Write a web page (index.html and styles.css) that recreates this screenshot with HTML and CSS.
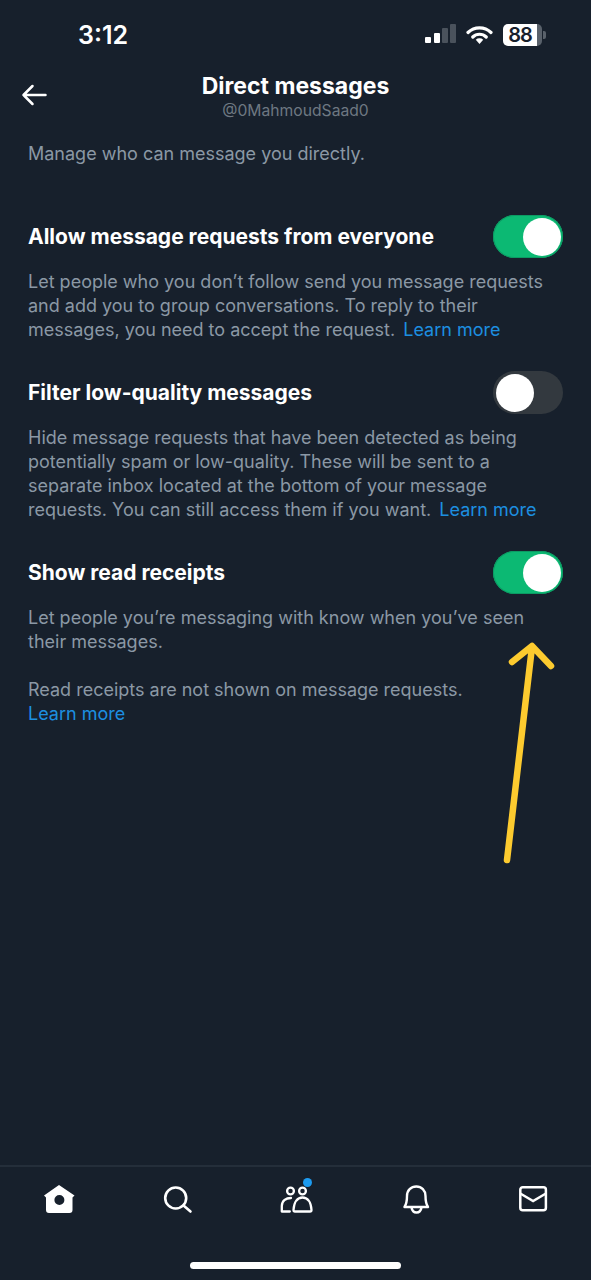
FILE: index.html
```html
<!DOCTYPE html>
<html lang="en">

<head>
  <meta charset="UTF-8">
  <meta name="viewport" content="width=device-width, initial-scale=1.0">
  <title>Direct messages</title>

  <link rel="stylesheet" href="styles.css">
</head>

<body>
  <div id="screen">
    <div id="statusBar">
      <span id="clock">3:12</span>
      <div id="statusIcons">
        <svg width="31" height="22" viewBox="0 0 31 22">
          <rect x="0" y="13" width="6" height="6" rx="1" fill="#fff" />
          <rect x="9" y="9" width="6" height="10" rx="1" fill="#fff" />
          <rect x="17" y="4" width="6" height="15" rx="1" fill="#4a525c" />
          <rect x="25" y="0" width="6" height="19" rx="1" fill="#4a525c" />
        </svg>
        <svg width="27" height="22" viewBox="0 0 27 22">
          <path d="M2 8.500a16.500 16.500 0 0 1 23 0M6.800 13a9.500 9.500 0 0 1 13.400 0" fill="none" stroke="#fff" stroke-width="3.200" stroke-linecap="round" />
          <path d="M9.800 15.800a5.500 5.500 0 0 1 7.400 0L13.500 20z" fill="#fff" />
        </svg>
        <div id="battery">
          <span id="batteryLevel">88</span>
          <span id="batteryRest"></span>
          <span id="batteryCap"></span>
        </div>
      </div>
    </div>

    <div id="header">
      <button id="backBtn" aria-label="Back">
        <svg width="26" height="24" viewBox="0 0 26 24">
          <path d="M24.500 12H2.500M11.500 3l-9 9 9 9" fill="none" stroke="#fff" stroke-width="2.500" stroke-linecap="round" stroke-linejoin="round" />
        </svg>
      </button>
      <h1>Direct messages</h1>
      <div id="handle">@0MahmoudSaad0</div>
    </div>

    <div id="content">
      <p class="muted" id="intro">Manage who can message you directly.</p>

      <div class="setting">
        <div class="settingRow">
          <h2>Allow message requests from everyone</h2>
          <div class="toggle on"><span class="knob"></span></div>
        </div>
        <p class="muted">Let people who you don’t follow send you message requests<br>and add you to group conversations. To reply to their<br>messages, you need to accept the request. <a class="inlineLink" href="#">Learn more</a></p>
      </div>

      <div class="setting">
        <div class="settingRow">
          <h2>Filter low-quality messages</h2>
          <div class="toggle"><span class="knob"></span></div>
        </div>
        <p class="muted">Hide message requests that have been detected as being<br>potentially spam or low-quality. These will be sent to a<br>separate inbox located at the bottom of your message<br>requests. You can still access them if you want. <a class="inlineLink" href="#">Learn more</a></p>
      </div>

      <div class="setting">
        <div class="settingRow">
          <h2>Show read receipts</h2>
          <div class="toggle on"><span class="knob"></span></div>
        </div>
        <p class="muted">Let people you’re messaging with know when you’ve seen<br>their messages.</p>
        <p class="muted" id="receiptNote">Read receipts are not shown on message requests.<br><a href="#">Learn more</a></p>
      </div>
    </div>

    <svg id="arrow" width="80" height="240" viewBox="0 0 80 240">
      <path d="M25 224L50 11M30 26L50 10L69 30" fill="none" stroke="#fdcb2f" stroke-width="6.500" stroke-linecap="round" stroke-linejoin="round" />
    </svg>

    <div id="tabBar">
      <div id="tabs">
        <svg width="36" height="36" viewBox="0 0 36 36">
          <path fill-rule="evenodd" d="M18 3L33.500 13.500L31.500 15.500V28a3 3 0 0 1-3 3H8a3 3 0 0 1-3-3V15.500L3 13.500zM18.400 13a5 5 0 1 0 0 10a5 5 0 0 0 0-10z" fill="#fff" />
        </svg>
        <svg width="36" height="36" viewBox="0 0 36 36">
          <circle cx="16.700" cy="16" r="10.500" fill="none" stroke="#fff" stroke-width="2.600" />
          <path d="M24.500 23.500L31.500 29.500" fill="none" stroke="#fff" stroke-width="2.600" stroke-linecap="round" />
        </svg>
        <div id="peopleTab">
          <svg width="36" height="36" viewBox="0 0 36 36">
            <circle cx="13.500" cy="9" r="3.400" fill="none" stroke="#fff" stroke-width="2.300" />
            <circle cx="25.500" cy="9" r="3.400" fill="none" stroke="#fff" stroke-width="2.300" />
            <path d="M14 16c-5 0-9 2.500-9.200 8v5.500h8" fill="none" stroke="#fff" stroke-width="2.300" stroke-linejoin="round" stroke-linecap="round" />
            <path d="M25.500 15.500c-5 0-8.500 4.500-9 12.500c0 1 0.500 1.500 1.500 1.500h15c1 0 1.500-0.500 1.500-1.500c-0.500-8-4-12.500-9-12.500z" fill="none" stroke="#fff" stroke-width="2.300" stroke-linejoin="round" />
          </svg>
          <span id="tabBadge"></span>
        </div>
        <svg width="36" height="36" viewBox="0 0 36 36">
          <path d="M8.500 25C10.500 22 11 18 11 14C11 8.500 15 4.500 20.300 4.500S29.500 8.500 29.500 14C29.500 18 30 22 32 25zM15.500 25.500c0.500 3 2.500 5 5 5s4.500-2 5-5" fill="none" stroke="#fff" stroke-width="2.400" stroke-linejoin="round" />
        </svg>
        <svg width="36" height="36" viewBox="0 0 36 36">
          <rect x="6.300" y="5.200" width="25.600" height="23" rx="2.500" fill="none" stroke="#fff" stroke-width="2.500" />
          <path d="M6.300 11.500L19.100 19L31.900 11.500" fill="none" stroke="#fff" stroke-width="2.500" />
        </svg>
      </div>
      <div id="homeBar"></div>
    </div>
  </div>
</body>

</html>
```

FILE: styles.css
```css
body {
  margin: 0px;
  background-color: #17202c;
  color: #ffffff;
  font-family: Inter, "Liberation Sans", sans-serif;
}

#screen {
  position: relative;
  display: flex;
  flex-direction: column;
  height: 1280px;
  overflow: hidden;
}

#statusBar {
  display: flex;
  justify-content: space-between;
  align-items: center;
  height: 70px;
  padding: 0px 45px 0px 78px;
  box-sizing: border-box;
}

#clock {
  font-size: 25px;
  font-weight: 600;
}

#statusIcons {
  display: flex;
  align-items: center;
  gap: 10px;
}

#battery {
  position: relative;
  display: flex;
  width: 43px;
  height: 22px;
  box-sizing: border-box;
  padding-right: 4px;
}

#batteryLevel {
  width: 34px;
  background-color: #ffffff;
  border-radius: 5px 0px 0px 5px;
  color: #17202c;
  font-size: 20px;
  font-weight: 600;
  letter-spacing: -1px;
  line-height: 22px;
  text-align: center;
}

#batteryRest {
  width: 5px;
  background-color: #59616b;
  border-radius: 0px 5px 5px 0px;
}

#batteryCap {
  position: absolute;
  right: 0px;
  top: 7px;
  width: 3px;
  height: 8px;
  background-color: #59616b;
  border-radius: 0px 2px 2px 0px;
}

#header {
  position: relative;
  height: 72px;
  text-align: center;
}

#backBtn {
  position: absolute;
  left: 21px;
  top: 13px;
  padding: 0px;
  border: none;
  background: none;
}

h1 {
  margin: 0px;
  font-size: 23px;
  font-weight: 700;
  line-height: 32px;
}

#handle {
  color: #6e7882;
  font-size: 15.700px;
  line-height: 18px;
}

#content {
  flex: 1;
  padding: 0px 28px;
}

p {
  margin: 0px;
  font-size: 18px;
  line-height: 24px;
}

.muted {
  color: #8b98a5;
}

a {
  color: #1d8fe0;
  text-decoration: none;
}

.inlineLink {
  margin-left: 3px;
}

#intro {
  margin-bottom: 49px;
}

.setting {
  margin-bottom: 29px;
}

.settingRow {
  display: flex;
  justify-content: space-between;
  align-items: center;
  margin-bottom: 12px;
}

h2 {
  margin: 0px;
  font-size: 21px;
  font-weight: 700;
}

.toggle {
  display: flex;
  width: 70px;
  height: 43px;
  padding: 2.500px;
  box-sizing: border-box;
  background-color: #33393f;
  border-radius: 22px;
}

.toggle.on {
  justify-content: flex-end;
  background-color: #0cb973;
  box-shadow: inset 0px 0px 0px 1px #0c9a63;
}

.knob {
  width: 38px;
  height: 38px;
  background-color: #ffffff;
  border-radius: 50%;
}

#receiptNote {
  margin-top: 24px;
}

#arrow {
  position: absolute;
  left: 482px;
  top: 636px;
}

#tabBar {
  height: 115px;
  border-top: 2px solid #242e3a;
  box-sizing: border-box;
}

#tabs {
  display: grid;
  grid-template-columns: repeat(5, 1fr);
  justify-items: center;
  padding-top: 15px;
}

#peopleTab {
  position: relative;
  height: 36px;
}

#tabBadge {
  position: absolute;
  top: -4px;
  left: 26px;
  width: 9px;
  height: 9px;
  background-color: #1d9bf0;
  border-radius: 50%;
}

#homeBar {
  width: 211px;
  height: 7px;
  margin: 44px auto 0px;
  background-color: #ffffff;
  border-radius: 4px;
}
```
